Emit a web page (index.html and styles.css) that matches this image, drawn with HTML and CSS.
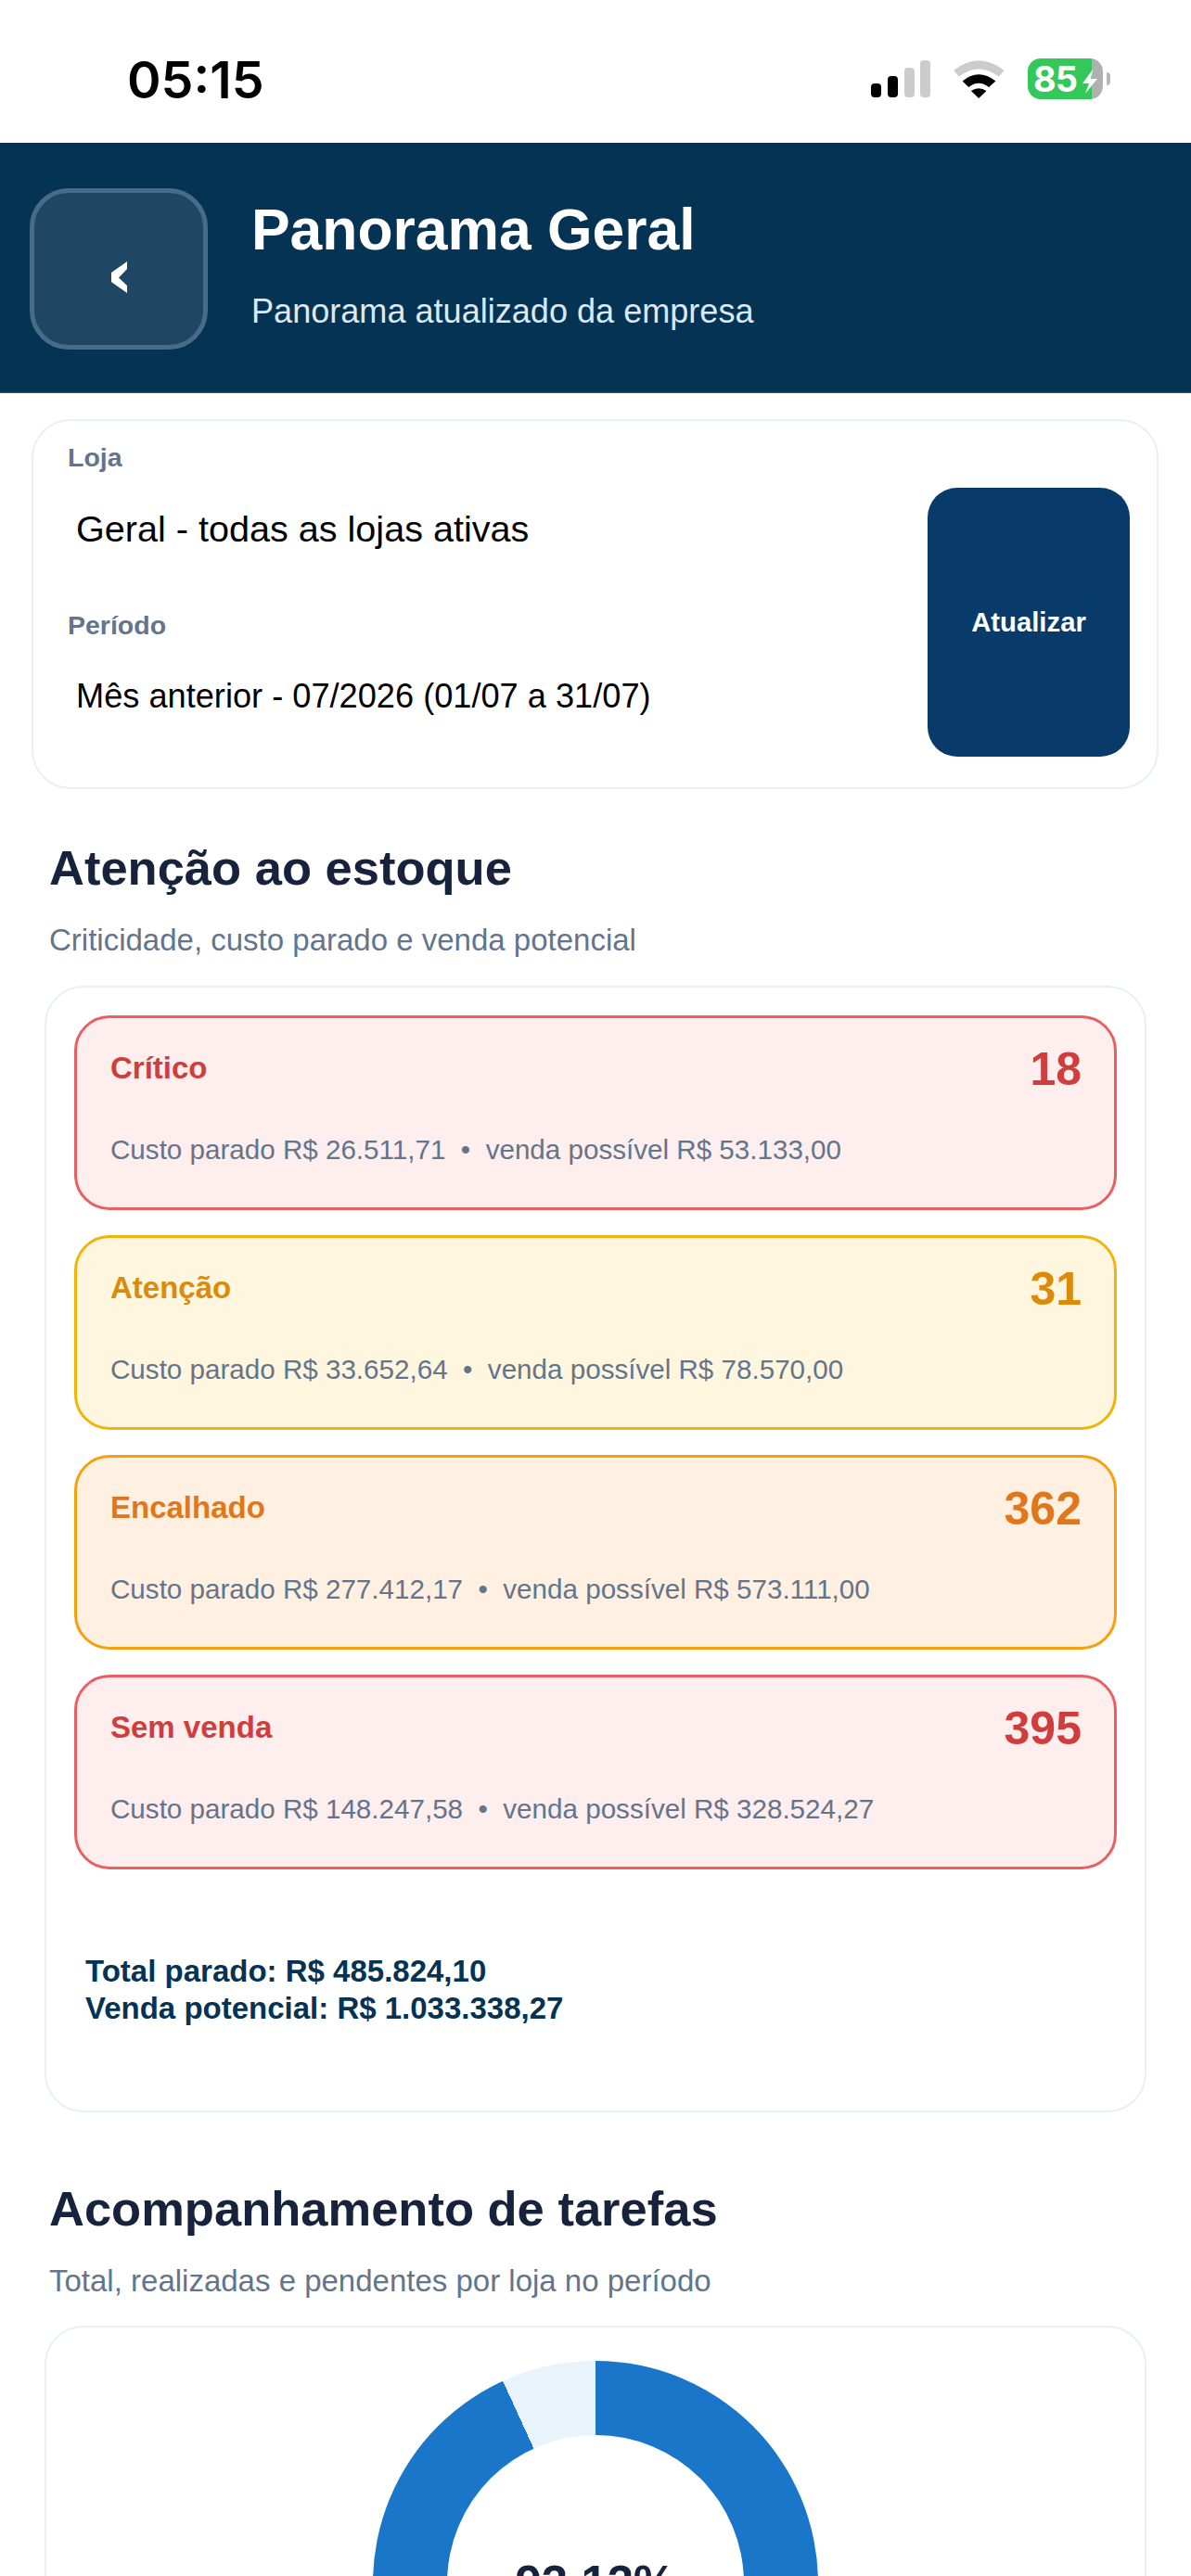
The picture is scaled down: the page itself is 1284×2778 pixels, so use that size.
FILE: index.html
```html
<!DOCTYPE html>
<html lang="pt-BR">
<head>
<meta charset="utf-8">
<title>Panorama Geral</title>
<link rel="stylesheet" href="styles.css">
</head>
<body>
<div class="screen">
  <div class="status-bar">
    <span class="time">05:15</span>
    <div class="status-icons">
      <svg class="signal" viewBox="0 0 64 40" width="64" height="40">
        <rect x="0" y="25" width="11" height="15" rx="4" fill="#000"/>
        <rect x="18" y="17" width="11" height="23" rx="4" fill="#000"/>
        <rect x="36" y="8" width="11" height="32" rx="4" fill="#ccc"/>
        <rect x="53" y="0" width="11" height="40" rx="4" fill="#ccc"/>
      </svg>
      <svg class="wifi" viewBox="443 70 166 128" width="55" height="43">
        <path d="M443 105 Q525 41 608 105 L590 125 Q525 76 461 125 Z" fill="#ccc"/>
        <path d="M472 140 Q525 97 580 140 L558 160 Q525 134 492 160 Z" fill="#000"/>
        <path d="M500 172 Q525 155 550 172 L525 196 Z" fill="#000"/>
      </svg>
      <div class="battery">
        <span class="battery-level">85</span>
        <svg class="bolt" viewBox="0 0 18 26" width="18" height="26">
          <path d="M12 0 L1 15 H8 L4 26 L17 10 H10 Z" fill="#fff"/>
        </svg>
      </div>
    </div>
  </div>

  <header class="top-bar">
    <button class="back-btn" aria-label="Voltar">
      <svg viewBox="0 0 17 34" width="17" height="34">
        <path d="M17 0 V8 L8 17.5 L17 26 V34 L0 22 V12 Z" fill="#fff"/>
      </svg>
    </button>
    <div class="top-text">
      <h1 class="top-title">Panorama Geral</h1>
      <p class="top-sub">Panorama atualizado da empresa</p>
    </div>
  </header>

  <section class="card filter-card">
    <div class="filters">
      <div class="field-label">Loja</div>
      <div class="field-value field-value-store">Geral - todas as lojas ativas</div>
      <div class="field-label field-label-second">Período</div>
      <div class="field-value field-value-period">Mês anterior - 07/2026 (01/07 a 31/07)</div>
    </div>
    <button class="refresh-btn">Atualizar</button>
  </section>

  <div class="section-head section-head-first">
    <h2 class="section-title">Atenção ao estoque</h2>
    <p class="section-sub">Criticidade, custo parado e venda potencial</p>
  </div>

  <section class="card panel stock-panel">
    <div class="alerts">
      <article class="alert alert-red">
        <div class="alert-head"><span class="alert-name">Crítico</span><span class="alert-count">18</span></div>
        <p class="alert-detail">Custo parado R$ 26.511,71 &nbsp;•&nbsp; venda possível R$ 53.133,00</p>
      </article>
      <article class="alert alert-yellow">
        <div class="alert-head"><span class="alert-name">Atenção</span><span class="alert-count">31</span></div>
        <p class="alert-detail">Custo parado R$ 33.652,64 &nbsp;•&nbsp; venda possível R$ 78.570,00</p>
      </article>
      <article class="alert alert-orange">
        <div class="alert-head"><span class="alert-name">Encalhado</span><span class="alert-count">362</span></div>
        <p class="alert-detail">Custo parado R$ 277.412,17 &nbsp;•&nbsp; venda possível R$ 573.111,00</p>
      </article>
      <article class="alert alert-red">
        <div class="alert-head"><span class="alert-name">Sem venda</span><span class="alert-count">395</span></div>
        <p class="alert-detail">Custo parado R$ 148.247,58 &nbsp;•&nbsp; venda possível R$ 328.524,27</p>
      </article>
    </div>
    <div class="totals">
      <div>Total parado: R$ 485.824,10</div>
      <div>Venda potencial: R$ 1.033.338,27</div>
    </div>
  </section>

  <div class="section-head section-head-next">
    <h2 class="section-title">Acompanhamento de tarefas</h2>
    <p class="section-sub">Total, realizadas e pendentes por loja no período</p>
  </div>

  <section class="card panel tasks-panel">
    <div class="donut">
      <div class="donut-hole"><span class="donut-value">93.13%</span></div>
    </div>
  </section>
</div>
</body>
</html>
```
FILE: styles.css
```css
* { box-sizing: border-box; }
html, body { margin: 0; padding: 0; background: #fff; }
body { font-family: "Liberation Sans", Arial, sans-serif; }
h1, h2, p { margin: 0; }
button { font-family: inherit; cursor: pointer; }

.screen { width: 1284px; height: 2778px; overflow: hidden; background: #fff; }

.status-bar { height: 154px; padding: 16px 87px 0 137px; display: flex; align-items: center; justify-content: space-between; background: #fff; }
.time { font-family: Inter, "Liberation Sans", sans-serif; font-weight: 600; font-size: 55.5px; line-height: 60px; margin-top: 2px; color: #000; }
.status-icons { display: flex; align-items: center; gap: 25px; }
.signal, .wifi { display: block; }
.battery { position: relative; width: 81px; height: 44px; border-radius: 14px; background: linear-gradient(90deg, #34c759 0 69px, #b0b0b0 69px); display: flex; align-items: center; padding-left: 6px; margin-right: 8px; }
.battery::after { content: ""; position: absolute; right: -8px; top: 15px; width: 4px; height: 14px; border-radius: 0 7px 7px 0; background: #b8b8b8; }
.battery-level { font-family: Inter, "Liberation Sans", sans-serif; font-weight: 700; font-size: 38px; line-height: 44px; letter-spacing: -1px; color: #fff; }
.bolt { position: absolute; left: 58px; top: 12px; }

.top-bar { height: 270px; background: #053354; display: flex; align-items: center; padding: 0 32px; gap: 47px; border-bottom: 1px solid #2c5475; }
.back-btn { width: 192px; height: 174px; flex: none; border-radius: 42px; border: 5px solid #486c87; background: #1f4763; display: flex; align-items: center; justify-content: center; padding: 18px 0 0; margin-top: 2px; }
.top-text { color: #fff; margin-bottom: 8px; }
.top-title { font-size: 62.4px; line-height: 72px; font-weight: 700; color: #fff; }
.top-sub { font-size: 36.1px; line-height: 44px; margin-top: 30px; color: #dbe9f4; }

.card { background: #fff; border: 2px solid #e9eff7; border-radius: 42px; }

.filter-card { margin: 28px 35px 0 34px; height: 399px; display: flex; justify-content: space-between; padding: 19px 29px 0 37px; }
.field-label { font-size: 28.5px; line-height: 40px; font-weight: 700; color: #64748b; }
.field-label-second { margin-top: 56px; }
.field-value { line-height: 56px; color: #000; padding-left: 9px; }
.field-value-store { font-size: 39.6px; margin-top: 29px; }
.field-value-period { font-size: 36.2px; margin-top: 29px; }
.refresh-btn { width: 218px; height: 290px; margin-top: 53px; border: 0; border-radius: 32px; background: #083b69; color: #fff; font-size: 29.3px; font-weight: 700; }

.section-head { padding-left: 53px; }
.section-head-first { margin-top: 55px; }
.section-head-next { margin-top: 74px; }
.section-title { font-size: 52.5px; line-height: 60px; font-weight: 700; color: #17233c; }
.section-sub { font-size: 33px; line-height: 40px; margin-top: 28px; color: #64748b; }

.panel { margin: 29px 48px 0; padding: 30px 30px 90px; }
.alerts { display: flex; flex-direction: column; gap: 27px; }
.alert { height: 210px; border: 3px solid; border-radius: 38px; padding: 26px 35px 0 36px; }
.alert-head { display: flex; align-items: center; justify-content: space-between; }
.alert-name { font-size: 33px; line-height: 38px; font-weight: 700; margin-bottom: 3px; }
.alert-count { font-size: 50px; line-height: 58px; font-weight: 700; }
.alert-detail { font-size: 29.6px; line-height: 40px; margin-top: 38px; color: #64748b; }
.alert-red { background: #feeeee; border-color: #ea5f64; color: #cf3d3d; }
.alert-yellow { background: #fff6df; border-color: #f1b40c; color: #db8a0a; }
.alert-orange { background: #fff0e1; border-color: #f5a00e; color: #e2761a; }

.totals { margin: 90px 0 0 12px; font-size: 33px; line-height: 40px; font-weight: 700; color: #053354; }

.tasks-panel { margin-top: 28px; padding: 36px 0 0; }
.donut { width: 480px; height: 480px; margin: 0 auto; border-radius: 50%; background: conic-gradient(#1976c9 0 335.4deg, #e8f3fc 335.4deg 360deg); display: flex; align-items: center; justify-content: center; }
.donut-hole { width: 320px; height: 320px; border-radius: 50%; background: #fff; display: flex; align-items: center; justify-content: center; }
.donut-value { font-size: 51px; line-height: 56px; font-weight: 700; color: #17233c; }
```
